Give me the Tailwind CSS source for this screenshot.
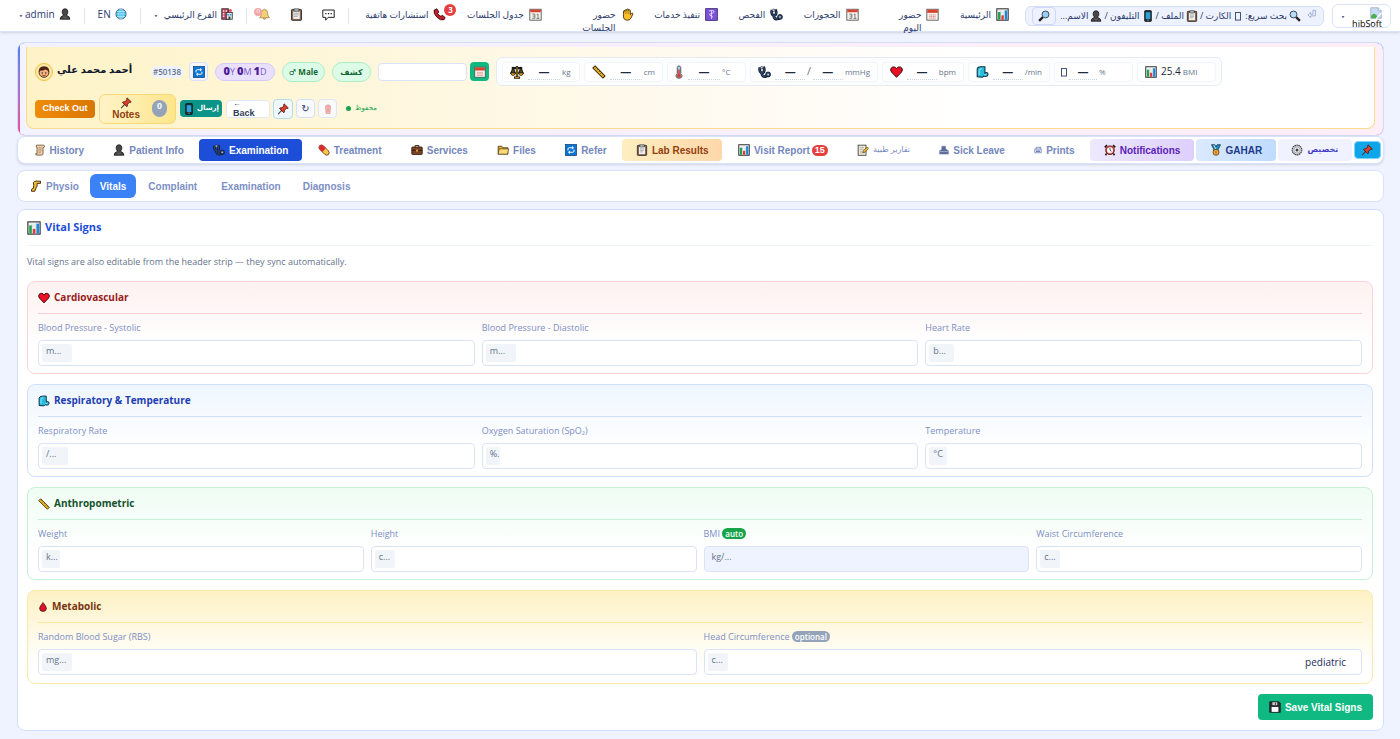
<!DOCTYPE html>
<html lang="ar">
<head>
  <meta charset="UTF-8" />
  <meta name="viewport" content="width=device-width, initial-scale=1.0" />
  <title>Vital Signs</title>
  <script src="https://cdn.jsdelivr.net/npm/@tailwindcss/browser@4"></script>
</head>
<body class="min-h-screen bg-[#eff3ff] font-['Open_Sans','DejaVu_Sans',sans-serif] text-[10px] text-[#2b3a6b]">

  <!-- icon sprite -->
  <svg class="hidden" xmlns="http://www.w3.org/2000/svg">
    <symbol id="i-chart" viewBox="0 0 16 16"><rect x="1" y="1" width="14" height="14" fill="#eef1f3" stroke="#222" stroke-width="1.2"/><path d="M5.5 2v12M10 2v12M2 6h12" stroke="#c9d0d5" stroke-width=".5"/><rect x="2.5" y="5" width="3" height="9.4" fill="#1fa34a"/><rect x="6.6" y="9" width="3" height="5.4" fill="#e23b3b"/><rect x="10.8" y="3" width="3" height="11.4" fill="#1b87d6"/></symbol>
    <symbol id="i-cal" viewBox="0 0 16 16"><rect x="1" y="1.5" width="14" height="13.5" fill="#f4f1ec" stroke="#4b4b4b"/><rect x="1.5" y="2" width="13" height="4" fill="#d8432f"/><path d="M4 8.5h8M4 10.5h8M4 12.5h8" stroke="#d98f84" stroke-width="1.2" stroke-dasharray="1.6 .5"/></symbol>
    <symbol id="i-cal31" viewBox="0 0 16 16"><rect x="1" y="1.5" width="14" height="13.5" fill="#f4f1ec" stroke="#4b4b4b"/><rect x="1.5" y="2" width="13" height="3.2" fill="#d8432f"/><path d="M4 7.5h3.2v5.2H4M4.6 10h2.6M9.5 8.3l1.6-.9v5.5M9.3 12.9h3.4" fill="none" stroke="#666" stroke-width="1"/></symbol>
    <symbol id="i-hand" viewBox="0 0 16 16"><path d="M3 8V4.200q0-1 1-1t1 1V3q0-1 1.100-1T7.200 3v-.8q0-1 1.100-1t1.100 1V3q.2-.8 1.100-.8t1 1V8l1.600-1.500q1.200-.7 1.700.4L12.500 12q-1.200 3-4.500 3-5 0-5-5z" fill="#fcbf2e" stroke="#2b1c00"/><path d="M5.200 4v3.500M7.300 3.500v4M9.500 3.500v4" stroke="#7a5200" stroke-width=".6"/></symbol>
    <symbol id="i-medic" viewBox="0 0 16 16"><rect x=".8" y=".8" width="14.400" height="14.400" fill="#7b52d8" stroke="#33216b"/><path d="M8 3v10.500M5 3.700q3-1.400 6 0 .8 2.300-3 3t-2 2.300q4 1 3.500 2.500" fill="none" stroke="#e9e0ff" stroke-width="1"/></symbol>
    <symbol id="i-steth" viewBox="0 0 16 16"><path d="M2.500 2.500Q1 7 4 9q3 .5 3.500-2.500T6.500 2M4.500 9Q5 14 8.500 13.500t3-3.500" fill="none" stroke="#10131a" stroke-width="3.400"/><path d="M2.500 2.500Q1 7 4 9q3 .5 3.500-2.500T6.500 2M4.500 9Q5 14 8.500 13.500t3-3.500" fill="none" stroke="#2c4a78" stroke-width="1.600"/><circle cx="4.500" cy="2.800" r="1.600" fill="#bcc3cc" stroke="#111" stroke-width=".6"/><circle cx="12.300" cy="11" r="3" fill="#2c4a78" stroke="#10131a"/><circle cx="12.300" cy="11" r="1.100" fill="#c2ccd8"/></symbol>
    <symbol id="i-phone" viewBox="0 0 16 16"><path d="M1.500 2.500 4.800 1l2.400 4-1.500 1.500q1 2.500 4 3.700L11.500 9l3.500 2.800-1.500 2.700q-4.500 1.500-9-3.500t-3-8.500z" fill="#c3202f" stroke="#300" stroke-width="1"/></symbol>
    <symbol id="i-speech" viewBox="0 0 16 16"><path d="M1 2.500h14v9H7.500L4.500 15v-3.500H1z" fill="#fff" stroke="#1c1c1c" stroke-width="1.200"/><path d="M4 7h1.500M7.300 7h1.500M10.600 7h1.500" stroke="#1c1c1c" stroke-width="1.500"/></symbol>
    <symbol id="i-clip" viewBox="0 0 16 16"><rect x="1.800" y="1.800" width="12.400" height="13.400" rx="1" fill="#8a6a4f" stroke="#1e1a17"/><path d="M4 4h8v9.500H4z" fill="#f2f2f2"/><path d="M5 1h6v3H5z" fill="#b9c0c6" stroke="#222" stroke-width=".7"/><path d="M5.200 6.500h5.600M5.200 8.500h5.600M5.200 10.500h4" stroke="#7d8790" stroke-width=".8"/></symbol>
    <symbol id="i-bell" viewBox="0 0 16 16"><path d="M8 1.500q-4 .5-4 5.500 0 3-2 5h12q-2-2-2-5 0-5-4-5.500z" fill="#f5cf7a" stroke="#a88848"/><path d="M6 12.500q2 3 4 0" fill="#e0a94a" stroke="#a88848"/></symbol>
    <symbol id="i-hotel" viewBox="0 0 16 16"><rect x="1" y="1" width="9" height="14" fill="#b9405d" stroke="#222"/><path d="M2.500 3h2v2h-2zM6 3h2v2H6zM2.500 6.500h2v2h-2zM2.500 10h2v2h-2z" fill="#f8e3e8"/><rect x="7" y="6" width="8" height="9" fill="#dfe6ea" stroke="#222"/><path d="M8.500 8h2v2h-2zM11.700 8h2v2h-2z" fill="#2f88c8"/><path d="M10 11.500h2.500V15H10z" fill="#333"/><circle cx="12.500" cy="3.300" r="2" fill="#e5484d"/></symbol>
    <symbol id="i-globe" viewBox="0 0 16 16"><circle cx="8" cy="8" r="6.800" fill="#35b7e8" stroke="#12456b"/><ellipse cx="8" cy="8" rx="3" ry="6.800" fill="none" stroke="#d7f3ff" stroke-width=".8"/><path d="M8 1.500v13M1.500 8h13M2.500 4.700h11M2.500 11.300h11" stroke="#d7f3ff" stroke-width=".8"/></symbol>
    <symbol id="i-user" viewBox="0 0 16 16"><path d="M1.500 15q0-4 4-4.800V9Q4 7.500 4.200 4.500 4.500 1 8 1t3.800 3.500Q12 7.500 10.500 9v1.200q4 .8 4 4.800z" fill="#474747" stroke="#161616"/><path d="M5.500 11.500 8 13.500l2.500-2" fill="none" stroke="#777" stroke-width=".8"/></symbol>
    <symbol id="i-boy" viewBox="0 0 16 16"><circle cx="8" cy="8.500" r="5.600" fill="#f4b183" stroke="#3a1d0c"/><path d="M2 8.500Q1.500 1.500 8 1.500t6 7Q12.500 5.500 9.500 5 6 7 3.500 6.500z" fill="#4a2412"/><circle cx="6" cy="9" r=".8" fill="#111"/><circle cx="10" cy="9" r=".8" fill="#111"/><path d="M6 11.500q2 1.500 4 0" fill="none" stroke="#7b2c14" stroke-width=".9"/></symbol>
    <symbol id="i-loop" viewBox="0 0 16 16"><rect x=".8" y=".8" width="14.400" height="14.400" fill="#0a74d4" stroke="#063c75"/><path d="M4 8.500V6.500q0-1.500 1.500-1.500H11M9.300 3.200 11.300 5l-2 1.800M12 7.500v2q0 1.500-1.500 1.500H5M6.700 9.200 4.700 11l2 1.800" fill="none" stroke="#fff" stroke-width="1.300"/></symbol>
    <symbol id="i-pin" viewBox="0 0 16 16"><path d="m6.500 9.500-5 5.200" stroke="#444" stroke-width="1.500"/><path d="M9.500 1.200 15 6.500l-1.200.8-1.300-.3L10 9.700q.4 2-.8 3.300L3.300 7.200Q4.500 6 6.600 6.300L9.200 3.800 8.800 2.300z" fill="#e0402a" stroke="#4a0d05" stroke-width="1.100"/></symbol>
    <symbol id="i-mobile" viewBox="0 0 16 16"><rect x="3.500" y=".8" width="9" height="14.400" rx="1" fill="#22303a" stroke="#111"/><rect x="5" y="3" width="6" height="9" fill="#2aa4d8"/><path d="M7 13.600h2" stroke="#bbb"/></symbol>
    <symbol id="i-scale" viewBox="0 0 16 16"><path d="M8 1v12M2 3.500h12M4.500 14.500h7" stroke="#191919" stroke-width="2.600"/><path d="M3.500 3 .8 9.500h5.400zM12.500 3 9.800 9.500h5.400z" fill="#5b4a16" stroke="#191919" stroke-width="1.200"/><path d="M.8 9h5.400q-.5 3-2.700 3T.8 9zM9.800 9h5.400q-.5 3-2.700 3t-2.700-3z" fill="#e8a91c" stroke="#191919" stroke-width=".9"/><path d="M8 2v11M5.500 14.300h5" stroke="#e8a91c" stroke-width="1"/></symbol>
    <symbol id="i-ruler" viewBox="0 0 16 16"><path d="M3.500 1 15 12.500 12.500 15 1 3.500z" fill="#f5bd24" stroke="#3c2c05" stroke-width="1.200"/><path d="m5 2.800-1.200 1.200M7 4.800 5.500 6.300M9 6.800 7.800 8M11 8.800l-1.500 1.500M13 10.800 11.800 12" stroke="#3c2c05" stroke-width=".8"/></symbol>
    <symbol id="i-thermo" viewBox="0 0 16 16"><path d="M6 10V2.800Q6.500 1 8 1t2 1.800V10q1.500 1 1.500 2.500Q11.200 15.200 8 15.200t-3.500-2.700Q4.500 11 6 10z" fill="#9bd5ec" stroke="#4f4145"/><path d="M8 5v6" stroke="#d93c34" stroke-width="1.800"/><circle cx="8" cy="12.400" r="2.300" fill="#d93c34"/></symbol>
    <symbol id="i-heart" viewBox="0 0 16 16"><path d="M8 14.500 1.800 8Q0 5.500 1.500 3.200 3 1.400 5.200 1.800 7 2.200 8 4q1-1.800 2.800-2.200 2.200-.4 3.700 1.400Q16 5.500 14.200 8z" fill="#e81224" stroke="#3a0308" stroke-width="1.200"/></symbol>
    <symbol id="i-wind" viewBox="0 0 16 16"><path d="M1.500 14V4Q2 1.500 6 1.500h5V9.500q1.500-1.500 3.200-.3 1.300 2-.4 3.800-2.300 1-4.300 0L8 14.500z" fill="#27bde0" stroke="#0d2e3c" stroke-width="1.300"/><path d="M4 11.500V6q.3-2 3-2.300M9.500 10.500q1 1.500 3 .7" fill="none" stroke="#a5ecfa" stroke-width="1.100"/></symbol>
    <symbol id="i-scroll" viewBox="0 0 16 16"><path d="M3.500 1.500h9q1.500 0 1.500 1.700T12 5v8q0 1.800-2 1.800H3.500Q2 14.500 2 13h2V4Q1.500 3.500 3.500 1.500z" fill="#efd0a8" stroke="#5a4026"/><path d="M6 5h4M6 7.200h4M6 9.400h4M6 11.600h3" stroke="#9a754c" stroke-width=".8"/></symbol>
    <symbol id="i-pill" viewBox="0 0 16 16"><path d="M2.200 2.200q2.300-2 4.800 0l7 7q2 2.500 0 4.800-2.500 2-4.800 0l-7-7q-2-2.500 0-4.800z" fill="#f7c843" stroke="#571313"/><path d="M2.200 2.200q2.300-2 4.800 0l3.500 3.500-4.800 4.800-3.500-3.500q-2-2.500 0-4.800z" fill="#d92b2b"/></symbol>
    <symbol id="i-case" viewBox="0 0 16 16"><path d="M5.500 4V2h5v2" fill="none" stroke="#2a1408" stroke-width="1.200"/><rect x="1" y="4" width="14" height="10" rx="1" fill="#7a4323" stroke="#2a1408"/><path d="M1 8.500h14" stroke="#2a1408"/><rect x="6.800" y="7.500" width="2.400" height="2.500" fill="#e5b545"/></symbol>
    <symbol id="i-folder" viewBox="0 0 16 16"><path d="M1.500 13.500V3h5l1.500 2h6.500v8.500z" fill="#e5a52d" stroke="#40310d"/><path d="m1.500 13.500 1.500-7h12.500l-1.500 7z" fill="#fbd976" stroke="#40310d" stroke-width=".8"/></symbol>
    <symbol id="i-memo" viewBox="0 0 16 16"><rect x="1.500" y="1.500" width="10.500" height="13.500" fill="#f5efe0" stroke="#222"/><path d="M3.500 4.500h6M3.500 7h6M3.500 9.500h4M3.500 12h3" stroke="#888" stroke-width=".8"/><path d="m7.500 12 1-3 5-5 2 2-5 5z" fill="#f0b429" stroke="#3c2c05" stroke-width=".8"/></symbol>
    <symbol id="i-sick" viewBox="0 0 16 16"><path d="M4.500 7V2h6v4.500L15 9v5.500H1V9z" fill="#596b94" stroke="#7083b2"/><path d="M1.500 10.500h13" stroke="#c2cde6"/></symbol>
    <symbol id="i-print" viewBox="0 0 16 16"><path d="M4.500 6V2.500h9V6M1.500 6h13v7.500h-13z" fill="#e8ecf8" stroke="#7083b2" stroke-width="1.600"/><path d="M4 9h8v3H4z" fill="#7083b2"/></symbol>
    <symbol id="i-alarm" viewBox="0 0 16 16"><path d="M3.500 12.500 2 15M12.500 12.500 14 15M1 4.500 4 1.500M15 4.500l-3-3" stroke="#3b1010" stroke-width="2.200"/><circle cx="8" cy="8.300" r="5.800" fill="#e2463d" stroke="#3b1010"/><circle cx="8" cy="8.300" r="4" fill="#fff"/><path d="M8 5.500v3l2 1.200" fill="none" stroke="#111"/></symbol>
    <symbol id="i-medal" viewBox="0 0 16 16"><path d="M2 1h4.500L8 4l1.500-3H14l-4 8H6z" fill="#1791cf" stroke="#0c2a3c"/><path d="M5 1.500 8.500 8" stroke="#fff"/><circle cx="8" cy="11" r="4" fill="#f2a93b" stroke="#4d3206"/><path d="M8 9v4" stroke="#7d5310"/></symbol>
    <symbol id="i-wheel" viewBox="0 0 16 16"><circle cx="8" cy="8" r="6.400" fill="#dfe1e4" stroke="#3c3f44" stroke-width="1.600" stroke-dasharray="2 .6"/><circle cx="8" cy="8" r="4.200" fill="#f4f4f4" stroke="#8b8f96"/><circle cx="8" cy="8" r="2" fill="#3c3f44"/></symbol>
    <symbol id="i-leg" viewBox="0 0 16 16"><path d="M4.500 3.500Q5.500 1.500 8 1.500h6v3H9.500v3.500L8 10.500 6.500 15H2v-2.500l2.500-1.500L5 7z" fill="#f4bb2d" stroke="#35270a" stroke-width="1.200"/></symbol>
    <symbol id="i-drop" viewBox="0 0 16 16"><path d="M8 .8q5.500 6.500 5.500 9.500-.5 4.900-5.500 4.900t-5.500-4.900Q2.500 7.300 8 .8z" fill="#d81425" stroke="#3a0308"/></symbol>
    <symbol id="i-save" viewBox="0 0 16 16"><path d="M1 1h12l2 2v12H1z" fill="#2f2f35" stroke="#111"/><path d="M4.500 1.500h6.500v4H4.500z" fill="#c6ccd2"/><path d="M3.500 8h9v6.500h-9z" fill="#fff"/><path d="M8.500 2v3" stroke="#333" stroke-width="1.300"/></symbol>
    <symbol id="i-find" viewBox="0 0 16 16"><path d="m9.500 9.500 5 5" stroke="#222" stroke-width="3"/><circle cx="6" cy="6" r="4.600" fill="#b8ddf5" stroke="#33475b" stroke-width="1.300"/></symbol>
    <symbol id="i-find-r" viewBox="0 0 16 16"><path d="m6.500 9.500-5 5" stroke="#222" stroke-width="3"/><circle cx="10" cy="6" r="4.600" fill="#9fd0f3" stroke="#33475b" stroke-width="1.300"/></symbol>
    <symbol id="i-trash" viewBox="0 0 16 16"><path d="M3 3.500h10M6 3V1.500h4V3M4 4l.8 11h6.400L12 4z" fill="#f5bcbc" stroke="#e59a9a" stroke-width="1.200"/><path d="M6.500 6v7M9.500 6v7" stroke="#dc8989"/></symbol>
    <symbol id="i-enter" viewBox="0 0 16 16"><path d="M9.500 2h4v9H6v3L1.500 9.500 6 5.500v3h3.500z" fill="#eef2ff" stroke="#8c9ccc" stroke-width="1.200"/></symbol>
    <symbol id="i-tofu" viewBox="0 0 16 16"><rect x="4" y="2.500" width="8" height="12" fill="none" stroke="#2b3a6b" stroke-width="1.400"/></symbol>
    <symbol id="i-img" viewBox="0 0 16 16"><path d="M1 1h10l4 4v10H1z" fill="#c8dcf5" stroke="#9aa4b5"/><path d="M11 1v4h4" fill="#fff" stroke="#9aa4b5"/><path d="M1.500 12q3-5 6-2l3 3-1.500 2H1.500z" fill="#4bae4f"/><path d="M8 15.500 15.500 8" stroke="#fff" stroke-width="1.500"/></symbol>
    <symbol id="i-caret" viewBox="0 0 16 16"><path d="M2 5h12l-6 7z" fill="#2b3a6b"/></symbol>
  </svg>

  <!-- top bar -->
  <header dir="rtl" class="flex h-8 items-center border-b border-[#dbe3fb] bg-white pr-[9px] pl-[19px] text-[9px] leading-[13px] font-medium whitespace-nowrap shadow-sm">
    <button type="button" class="flex h-6 w-[59px] shrink-0 items-start justify-between overflow-hidden rounded-md border border-[#dde4fa] px-2 pt-0.5">
      <span class="flex w-8 flex-col items-start text-[9px] leading-[9px] text-black"><svg class="size-3 shrink-0"><use href="#i-img"/></svg><span dir="ltr">hibSoft</span></span>
      <svg class="mt-2 size-1"><use href="#i-caret"/></svg>
    </button>
    <form class="mr-2 flex h-5 w-[299px] shrink-0 items-center rounded-md border border-[#d6dffa] bg-[#eef2ff] px-1.5">
      <svg class="mb-1 size-2.5 shrink-0"><use href="#i-enter"/></svg>
      <label for="q" class="mr-1.5 flex flex-1 items-center gap-0.5"><svg class="size-3 shrink-0"><use href="#i-find"/></svg><span>بحث سريع:</span><svg class="size-2.5 shrink-0"><use href="#i-tofu"/></svg><span>الكارت /</span><svg class="size-3 shrink-0"><use href="#i-clip"/></svg><span>الملف /</span><svg class="size-3 shrink-0"><use href="#i-mobile"/></svg><span>التليفون /</span><svg class="size-3 shrink-0"><use href="#i-user"/></svg><span>الاسم...</span></label>
      <input id="q" type="search" class="w-0" />
      <button type="button" aria-label="بحث" class="flex h-[18px] w-6 shrink-0 items-center justify-center rounded border border-[#d0daf8]"><svg class="size-3"><use href="#i-find-r"/></svg></button>
    </form>
    <nav class="mr-4 flex h-7 flex-1 items-start justify-between pt-1.5">
      <a href="#" class="flex gap-[5px]"><svg class="size-[13px]"><use href="#i-chart"/></svg>الرئيسية</a>
      <a href="#" class="flex gap-[5px]"><svg class="size-[13px]"><use href="#i-cal"/></svg><span>حضور<br>اليوم</span></a>
      <a href="#" class="mr-5 flex gap-[5px]"><svg class="size-[13px]"><use href="#i-cal31"/></svg>الحجوزات</a>
      <a href="#" class="flex gap-[5px]"><svg class="size-[13px]"><use href="#i-steth"/></svg>الفحص</a>
      <a href="#" class="flex gap-[5px]"><svg class="size-[13px]"><use href="#i-medic"/></svg>تنفيذ خدمات</a>
      <a href="#" class="flex gap-[5px]"><svg class="size-[13px]"><use href="#i-hand"/></svg><span>حضور<br>الجلسات</span></a>
      <a href="#" class="mr-5 flex gap-[5px]"><svg class="size-[13px]"><use href="#i-cal31"/></svg>جدول الجلسات</a>
      <a href="#" class="relative flex gap-[5px]"><svg class="size-[13px]"><use href="#i-phone"/></svg>استشارات هاتفية<span class="absolute -top-1 -right-2.5 flex size-3 items-center justify-center rounded-full bg-[#e53e3e] text-[8px] font-bold text-white">3</span></a>
    </nav>
    <div class="mr-4 flex h-7 items-start gap-[13px] pt-1.5">
      <span class="h-4 w-px bg-[#e0e6fa]"></span>
      <button type="button" aria-label="رسائل"><svg class="size-[13px]"><use href="#i-speech"/></svg></button>
      <button type="button" aria-label="مهام" class="mr-1.5"><svg class="size-[13px]"><use href="#i-clip"/></svg></button>
      <button type="button" aria-label="تنبيهات" class="relative mr-1.5 -ml-1.5 pl-1"><svg class="size-[13px]"><use href="#i-bell"/></svg><span class="absolute top-0 left-0 flex size-2 items-center justify-center rounded-full bg-[#f3a5a5] text-[6px] text-white">0</span></button>
      <span class="h-4 w-px bg-[#e0e6fa]"></span>
      <button type="button" class="flex gap-1"><svg class="size-3"><use href="#i-hotel"/></svg>الفرع الرئيسي<svg class="mt-1.5 mr-0.5 size-1"><use href="#i-caret"/></svg></button>
      <span class="h-4 w-px bg-[#e0e6fa]"></span>
      <button type="button" class="flex gap-1 text-[10px]"><svg class="size-3"><use href="#i-globe"/></svg>EN</button>
      <span class="h-4 w-px bg-[#e0e6fa]"></span>
      <button type="button" class="flex gap-1 text-[10px]"><svg class="size-3"><use href="#i-user"/></svg>admin<svg class="mt-1.5 -mr-0.5 size-1"><use href="#i-caret"/></svg></button>
    </div>
  </header>

  <main class="px-4 pt-2.5 pl-[17px]">
    <!-- patient header -->
    <section class="overflow-hidden rounded-lg border border-[#d6dcf8] bg-linear-to-b from-[#3b82f6] to-[#ec4899] pl-0.5">
      <div class="bg-linear-to-r from-[#f3f2ff] to-[#fdeef8] pt-1 pr-2 pb-1.5 pl-1.5">
        <div class="flex h-[82px] flex-col justify-between rounded-b-lg border border-t-0 border-[#f8dc8c] bg-linear-to-r from-[#fef3c7] via-[#fffaf0] via-50% to-white to-70% px-2 pt-2.5 pb-1">
          <div class="flex h-[29px] items-center">
            <span class="flex size-[18px] items-center justify-center rounded-full border border-[#f0c040] bg-[#fde9a8]"><svg class="size-3.5"><use href="#i-boy"/></svg></span>
            <h1 dir="rtl" class="ml-1 w-[94px] pb-1.5 text-[10px] leading-4 font-bold whitespace-nowrap text-[#0f172a]"><span class="block text-left">أحمد محمد علي</span></h1>
            <span class="w-8 rounded-full bg-[#eef2ff] text-center text-[8px] leading-3 font-semibold text-[#64748b]">#50138</span>
            <button type="button" aria-label="Refresh" class="ml-1.5 flex size-[19px] items-center justify-center rounded border border-[#d6dffa] bg-[#f3f6ff]"><svg class="size-3"><use href="#i-loop"/></svg></button>
            <span class="ml-[7px] flex h-[18px] w-[60px] items-center justify-center gap-0.5 rounded-full border border-[#d6c8fb] bg-[#e9e0fe] text-[9px] font-medium text-[#7c5cc9]"><span><b class="text-[11px] font-extrabold text-[#4c1d95]">0</b>Y</span><span><b class="text-[11px] font-extrabold text-[#4c1d95]">0</b>M</span><span><b class="text-[11px] font-extrabold text-[#4c1d95]">1</b>D</span></span>
            <span class="ml-[7px] flex h-5 w-[43px] items-center justify-center rounded-full border border-[#a7f0c4] bg-[#dcfce7] text-[8px] font-bold whitespace-nowrap text-[#166534]"><span class="font-normal">♂</span>&nbsp;Male</span>
            <span class="ml-[7px] flex h-5 w-[39px] items-center justify-center rounded-full border border-[#a7f0c4] bg-[#dcfce7] text-[8px] font-bold text-[#166534]">كشف</span>
            <input type="text" aria-label="Visit date" class="ml-[7px] h-[18px] w-[89px] rounded border border-[#dbe3f4] bg-white px-1" />
            <button type="button" aria-label="Open calendar" class="ml-[3px] flex size-[19px] items-center justify-center rounded bg-[#10b981]"><svg class="size-3"><use href="#i-cal"/></svg></button>
            <div class="ml-[7px] flex h-[29px] items-center gap-1 rounded-md border border-[#e5eaf3] bg-[#fcfdff] px-[5px] text-[#64748b]">
              <div class="flex h-5 w-[78px] items-center rounded border border-[#f1f4fb] bg-white px-[7px] text-[8px]"><svg class="size-3.5"><use href="#i-scale"/></svg><b class="ml-1 w-8 border-b border-dotted border-[#cbd5e1] text-center text-[11px] leading-4 text-[#1e293b]">—</b><span class="ml-0.5">kg</span></div>
              <div class="flex h-5 w-[79px] items-center rounded border border-[#f1f4fb] bg-white px-[7px] text-[8px]"><svg class="size-3.5"><use href="#i-ruler"/></svg><b class="ml-1 w-8 border-b border-dotted border-[#cbd5e1] text-center text-[11px] leading-4 text-[#1e293b]">—</b><span class="ml-0.5">cm</span></div>
              <div class="flex h-5 w-[79px] items-center rounded border border-[#f1f4fb] bg-white px-1 text-[8px]"><svg class="size-3.5"><use href="#i-thermo"/></svg><b class="ml-0.5 w-8 border-b border-dotted border-[#cbd5e1] text-center text-[11px] leading-4 text-[#1e293b]">—</b><span class="ml-0.5">°C</span></div>
              <div class="flex h-5 w-32 items-center rounded border border-[#f1f4fb] bg-white px-[7px] text-[8px]"><svg class="size-3.5"><use href="#i-steth"/></svg><b class="ml-1 w-8 border-b border-dotted border-[#cbd5e1] text-center text-[11px] leading-4 text-[#1e293b]">—</b><span class="w-2 text-center text-[11px]">/</span><b class="w-8 border-b border-dotted border-[#cbd5e1] text-center text-[11px] leading-4 text-[#1e293b]">—</b><span class="ml-0.5">mmHg</span></div>
              <div class="flex h-5 w-[82px] items-center rounded border border-[#f1f4fb] bg-white px-[7px] text-[8px]"><svg class="size-3.5"><use href="#i-heart"/></svg><b class="ml-1 w-8 border-b border-dotted border-[#cbd5e1] text-center text-[11px] leading-4 text-[#1e293b]">—</b><span class="ml-0.5">bpm</span></div>
              <div class="flex h-5 w-[82px] items-center rounded border border-[#f1f4fb] bg-white px-[7px] text-[8px]"><svg class="size-3.5"><use href="#i-wind"/></svg><b class="ml-1 w-8 border-b border-dotted border-[#cbd5e1] text-center text-[11px] leading-4 text-[#1e293b]">—</b><span class="ml-0.5">/min</span></div>
              <div class="flex h-5 w-[79px] items-center rounded border border-[#f1f4fb] bg-white px-1 text-[8px]"><svg class="size-2.5"><use href="#i-tofu"/></svg><b class="w-7 border-b border-dotted border-[#cbd5e1] text-center text-[11px] leading-4 text-[#1e293b]">—</b><span class="ml-0.5">%</span></div>
              <div class="flex h-5 w-[79px] items-center rounded border border-[#f1f4fb] bg-white px-[7px] text-[8px]"><svg class="size-3"><use href="#i-chart"/></svg><span class="ml-1 text-[10px] text-[#1e293b]">25.4</span><span class="ml-0.5">BMI</span></div>
            </div>
          </div>
          <div class="flex h-[31px] items-center">
            <button type="button" class="h-[18px] w-[60px] rounded bg-linear-to-r from-[#f08c0a] to-[#d97706] font-['Liberation_Sans',sans-serif] text-[9px] font-bold text-white">Check Out</button>
            <button type="button" class="ml-1 flex h-[30px] w-[77px] items-center justify-end gap-3 rounded-md border border-[#f8d878] bg-linear-to-r from-[#fef3c7] to-[#fde68a] pr-2 font-['Liberation_Sans',sans-serif] text-[10px] leading-[11px] font-bold text-[#92400e]"><span class="flex flex-col items-center"><svg class="size-3"><use href="#i-pin"/></svg>Notes</span><span class="flex h-[17px] w-[15px] items-start justify-center rounded-full bg-[#94a3b8] text-[9px] leading-[13px] text-white">0</span></button>
            <button type="button" class="ml-1 flex h-[17px] w-[42px] items-center justify-center gap-0.5 rounded bg-[#0d9488] text-[7px] font-bold text-white"><svg class="size-3"><use href="#i-mobile"/></svg>إرسال</button>
            <button type="button" class="ml-1 flex h-[18px] w-11 flex-col items-start justify-center rounded border border-[#e2e8f0] bg-white pl-1.5 font-['Liberation_Sans',sans-serif] text-[9px] font-bold text-[#334155]"><span class="text-[8px] leading-[8px]">←</span><span class="leading-[10px]">Back</span></button>
            <button type="button" aria-label="Pin header" class="ml-[3px] flex size-5 items-center justify-center rounded border border-[#b5dcea] bg-[#f0f8ff]"><svg class="size-3"><use href="#i-pin"/></svg></button>
            <button type="button" aria-label="Reload" class="ml-[3px] flex size-[19px] items-center justify-center rounded border border-[#d6dffa] bg-[#f8faff] text-[10px]">↻</button>
            <button type="button" aria-label="Delete" class="ml-[3px] flex size-[19px] items-center justify-center rounded border border-[#e2e6f2] bg-[#f8fafc]"><svg class="size-2.5"><use href="#i-trash"/></svg></button>
            <span class="ml-[9px] flex items-center gap-1 text-[7px] font-medium text-[#16a34a]"><span class="size-[5px] rounded-full bg-[#16a34a]"></span>محفوظ</span>
          </div>
        </div>
      </div>
    </section>

    <!-- main tabs -->
    <nav class="flex h-7 items-center gap-0.5 rounded-lg border border-[#d9e2fa] bg-white px-0.5 font-['Liberation_Sans','DejaVu_Sans',sans-serif] text-[10px] font-bold whitespace-nowrap text-[#7487bd] shadow-sm">
      <a href="#" class="flex h-[22px] flex-auto items-center justify-center gap-1"><svg class="size-3"><use href="#i-scroll"/></svg>History</a>
      <a href="#" class="flex h-[22px] flex-auto items-center justify-center gap-1"><svg class="size-3"><use href="#i-user"/></svg>Patient Info</a>
      <a href="#" class="flex h-[22px] flex-auto items-center justify-center gap-1 rounded bg-[#1d4ed8] text-white"><svg class="size-3"><use href="#i-steth"/></svg>Examination</a>
      <a href="#" class="flex h-[22px] flex-auto items-center justify-center gap-1"><svg class="size-3"><use href="#i-pill"/></svg>Treatment</a>
      <a href="#" class="flex h-[22px] flex-auto items-center justify-center gap-1"><svg class="size-3"><use href="#i-case"/></svg>Services</a>
      <a href="#" class="flex h-[22px] flex-auto items-center justify-center gap-1"><svg class="size-3"><use href="#i-folder"/></svg>Files</a>
      <a href="#" class="flex h-[22px] flex-auto items-center justify-center gap-1"><svg class="size-3"><use href="#i-loop"/></svg>Refer</a>
      <a href="#" class="flex h-[22px] flex-auto items-center justify-center gap-1 rounded bg-linear-to-r from-[#fdeec0] to-[#fed7aa] text-[#92400e]"><svg class="size-3"><use href="#i-clip"/></svg>Lab Results</a>
      <a href="#" class="flex h-[22px] flex-auto items-center justify-center gap-1"><svg class="size-3"><use href="#i-chart"/></svg>Visit Report<span class="-ml-0.5 rounded-full bg-[#e53e3e] px-[3px] text-[9px] leading-[11px] text-white">15</span></a>
      <a href="#" class="flex h-[22px] flex-auto items-center justify-center gap-1 text-[8px] font-normal"><svg class="size-3"><use href="#i-memo"/></svg>تقارير طبية</a>
      <a href="#" class="flex h-[22px] flex-auto items-center justify-center gap-1"><svg class="size-2.5"><use href="#i-sick"/></svg>Sick Leave</a>
      <a href="#" class="flex h-[22px] flex-auto items-center justify-center gap-1"><svg class="size-2"><use href="#i-print"/></svg>Prints</a>
      <a href="#" class="flex h-[22px] flex-auto items-center justify-center gap-1 rounded bg-linear-to-r from-[#ede9fe] to-[#ddd0fd] text-[#5b21b6]"><svg class="size-3"><use href="#i-alarm"/></svg>Notifications</a>
      <a href="#" class="flex h-[22px] flex-auto items-center justify-center gap-1 rounded bg-linear-to-r from-[#dbeafe] to-[#bfdbfe] text-[#1e3a8a]"><svg class="size-3"><use href="#i-medal"/></svg>GAHAR</a>
      <a href="#" class="flex h-[22px] flex-auto items-center justify-center gap-1 rounded bg-[#f0f3ff] text-[8px] text-[#4338ca]"><svg class="size-3"><use href="#i-wheel"/></svg>تخصيص</a>
      <button type="button" aria-label="Pin tabs" class="flex h-[18px] w-[27px] items-center justify-center rounded border border-[#7dd3fc] bg-[#0ea5e9]"><svg class="size-3"><use href="#i-pin"/></svg></button>
    </nav>

    <!-- examination sub tabs -->
    <nav class="mt-1.5 flex h-8 items-center rounded-lg border border-[#d9e2fa] bg-white px-[3px] font-['Liberation_Sans',sans-serif] text-[10px] font-bold text-[#7d8fc4]">
      <a href="#" class="flex h-6 items-center gap-1 px-[9px]"><svg class="size-3"><use href="#i-leg"/></svg>Physio</a>
      <a href="#" class="ml-0.5 flex h-6 items-center rounded-md bg-[#3b82f6] px-2.5 text-white">Vitals</a>
      <a href="#" class="ml-0.5 flex h-6 items-center px-2.5">Complaint</a>
      <a href="#" class="ml-1 flex h-6 items-center px-2.5">Examination</a>
      <a href="#" class="ml-0.5 flex h-6 items-center px-2.5">Diagnosis</a>
    </nav>

    <form class="mt-[7px] rounded-lg border border-[#d3dffa] bg-white pr-2.5 pb-2.5 pl-[9px]">
      <h2 class="flex h-9 items-center gap-1 border-b border-[#eef2fb] text-[11px] font-bold text-[#1d4ed8]"><svg class="size-3.5"><use href="#i-chart"/></svg>Vital Signs</h2>
      <p class="mt-2 mb-3 text-[9px] leading-[15px] text-[#64748b]">Vital signs are also editable from the header strip — they sync automatically.</p>

      <div class="flex flex-col gap-2.5 text-[9px] font-medium text-[#7d8fc4]">
        <section class="rounded-lg border border-[#fbd5d5] bg-linear-to-b from-[#fef1f1] to-white to-70% px-2.5 pb-[7px]">
          <h3 class="flex h-8 items-center gap-1 border-b border-[#fbd0d0] text-[10px] font-bold text-[#991b1b]"><svg class="size-3"><use href="#i-heart"/></svg>Cardiovascular</h3>
          <div class="mt-1.5 grid grid-cols-3 gap-[7px]">
            <div><label for="sys" class="block h-5 leading-4">Blood Pressure - Systolic</label>
              <div class="flex h-[26px] rounded border border-[#dbe3f8] bg-white p-[3px]"><span class="w-[30px] rounded-xs bg-[#f1f5f9] pl-1 text-[9px] leading-[13px] text-[#64748b]">m...</span><input id="sys" type="text" class="min-w-0 flex-1 px-2" /></div></div>
            <div><label for="dia" class="block h-5 leading-4">Blood Pressure - Diastolic</label>
              <div class="flex h-[26px] rounded border border-[#dbe3f8] bg-white p-[3px]"><span class="w-[30px] rounded-xs bg-[#f1f5f9] pl-1 text-[9px] leading-[13px] text-[#64748b]">m...</span><input id="dia" type="text" class="min-w-0 flex-1 px-2" /></div></div>
            <div><label for="hr" class="block h-5 leading-4">Heart Rate</label>
              <div class="flex h-[26px] rounded border border-[#dbe3f8] bg-white p-[3px]"><span class="w-[25px] rounded-xs bg-[#f1f5f9] pl-1 text-[9px] leading-[13px] text-[#64748b]">b...</span><input id="hr" type="text" class="min-w-0 flex-1 px-2" /></div></div>
          </div>
        </section>

        <section class="rounded-lg border border-[#cfe0fa] bg-linear-to-b from-[#eff6ff] to-white to-70% px-2.5 pb-[7px]">
          <h3 class="flex h-8 items-center gap-1 border-b border-[#cfe0fa] text-[10px] font-bold text-[#1e40af]"><svg class="size-3"><use href="#i-wind"/></svg>Respiratory &amp; Temperature</h3>
          <div class="mt-1.5 grid grid-cols-3 gap-[7px]">
            <div><label for="rr" class="block h-5 leading-4">Respiratory Rate</label>
              <div class="flex h-[26px] rounded border border-[#dbe3f8] bg-white p-[3px]"><span class="w-[26px] rounded-xs bg-[#f1f5f9] pl-1 text-[9px] leading-[13px] text-[#64748b]">/...</span><input id="rr" type="text" class="min-w-0 flex-1 px-2" /></div></div>
            <div><label for="spo2" class="block h-5 leading-4">Oxygen Saturation (SpO₂)</label>
              <div class="flex h-[26px] rounded border border-[#dbe3f8] bg-white p-[3px]"><span class="w-3.5 rounded-xs bg-[#f1f5f9] pl-1 text-[9px] leading-[13px] text-[#64748b]">%.</span><input id="spo2" type="text" class="min-w-0 flex-1 px-2" /></div></div>
            <div><label for="temp" class="block h-5 leading-4">Temperature</label>
              <div class="flex h-[26px] rounded border border-[#dbe3f8] bg-white p-[3px]"><span class="w-[18px] rounded-xs bg-[#f1f5f9] pl-1 text-[9px] leading-[13px] text-[#64748b]">°C</span><input id="temp" type="text" class="min-w-0 flex-1 px-2" /></div></div>
          </div>
        </section>

        <section class="rounded-lg border border-[#c6f3d5] bg-linear-to-b from-[#effdf4] to-white to-70% px-2.5 pb-[7px]">
          <h3 class="flex h-8 items-center gap-1 border-b border-[#c6f3d5] text-[10px] font-bold text-[#14532d]"><svg class="size-3"><use href="#i-ruler"/></svg>Anthropometric</h3>
          <div class="mt-1.5 grid grid-cols-4 gap-[7px]">
            <div><label for="weight" class="block h-5 leading-4">Weight</label>
              <div class="flex h-[26px] rounded border border-[#dbe3f8] bg-white p-[3px]"><span class="w-[18px] rounded-xs bg-[#f1f5f9] pl-1 text-[9px] leading-[13px] text-[#64748b]">k...</span><input id="weight" type="text" class="min-w-0 flex-1 px-2" /></div></div>
            <div><label for="height" class="block h-5 leading-4">Height</label>
              <div class="flex h-[26px] rounded border border-[#dbe3f8] bg-white p-[3px]"><span class="w-5 rounded-xs bg-[#f1f5f9] pl-1 text-[9px] leading-[13px] text-[#64748b]">c...</span><input id="height" type="text" class="min-w-0 flex-1 px-2" /></div></div>
            <div><label for="bmi" class="block h-5 leading-4">BMI <span class="inline-block rounded-full bg-[#16a34a] px-[3px] text-[8px] leading-[11px] font-semibold text-white">auto</span></label>
              <div class="flex h-[26px] rounded border border-[#dbe3f8] bg-[#eff3ff] p-[3px]"><span class="pl-1 text-[9px] leading-[13px] text-[#64748b]">kg/...</span><input id="bmi" type="text" readonly class="min-w-0 flex-1 px-2" /></div></div>
            <div><label for="waist" class="block h-5 leading-4">Waist Circumference</label>
              <div class="flex h-[26px] rounded border border-[#dbe3f8] bg-white p-[3px]"><span class="w-5 rounded-xs bg-[#f1f5f9] pl-1 text-[9px] leading-[13px] text-[#64748b]">c...</span><input id="waist" type="text" class="min-w-0 flex-1 px-2" /></div></div>
          </div>
        </section>

        <section class="rounded-lg border border-[#fbe9a8] bg-linear-to-b from-[#fef1c4] to-white to-80% px-2.5 pb-2">
          <h3 class="flex h-8 items-center gap-1 border-b border-[#fde89a] text-[10px] font-bold text-[#78350f]"><svg class="h-3 w-2.5"><use href="#i-drop"/></svg>Metabolic</h3>
          <div class="mt-1.5 grid grid-cols-2 gap-[7px]">
            <div><label for="rbs" class="block h-5 leading-4">Random Blood Sugar (RBS)</label>
              <div class="flex h-[26px] rounded border border-[#dbe3f8] bg-white p-[3px]"><span class="w-[30px] rounded-xs bg-[#f1f5f9] pl-1 text-[9px] leading-[13px] text-[#64748b]">mg...</span><input id="rbs" type="text" class="min-w-0 flex-1 px-2" /></div></div>
            <div><label for="head" class="block h-5 leading-4">Head Circumference <span class="inline-block rounded-full bg-[#94a3b8] px-[3px] text-[8px] leading-[11px] font-semibold text-white">optional</span></label>
              <div class="flex h-[26px] rounded border border-[#dbe3f8] bg-white p-[3px]"><span class="w-5 rounded-xs bg-[#f1f5f9] pl-1 text-[9px] leading-[13px] text-[#64748b]">c...</span><input id="head" type="text" value="pediatric" class="min-w-0 flex-1 pr-3 text-right text-[10px] font-normal text-[#1e2a5a]" /></div></div>
          </div>
        </section>
      </div>

      <div class="mt-2.5 flex justify-end">
        <button type="button" class="flex h-[26px] items-center gap-1 rounded bg-[#10b981] px-[11px] font-['Liberation_Sans',sans-serif] text-[10px] font-bold text-white"><svg class="size-3"><use href="#i-save"/></svg>Save Vital Signs</button>
      </div>
    </form>
  </main>
</body>
</html>
